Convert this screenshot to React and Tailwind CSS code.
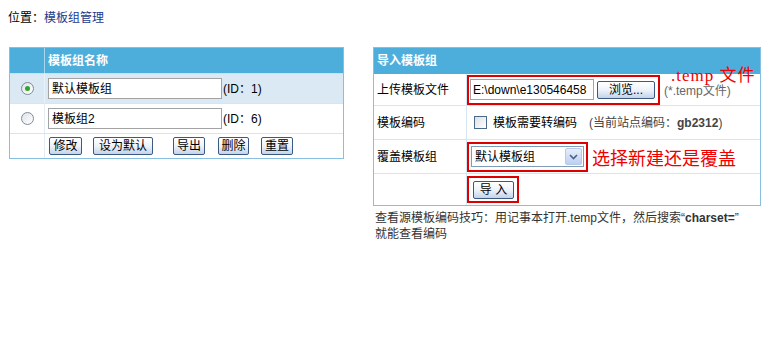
import React from "react";

function Btn({ children, className }) {
  return (
    <button
      className={
        "h-[18px] border border-[#3a5a82] rounded-[2px] bg-linear-to-b from-white via-[#eef3fa] to-[#c3d3ea] text-[12px] leading-[14px] text-black p-0 flex items-center justify-center shrink-0 " +
        className
      }
    >
      {children}
    </button>
  );
}

function Radio({ checked }) {
  return (
    <span className="w-[13px] h-[13px] rounded-full border border-[#7f8c99] bg-linear-to-br from-[#dfe3e8] to-white flex items-center justify-center">
      {checked ? <span className="w-[5px] h-[5px] rounded-full bg-[#2ea62a]" /> : null}
    </span>
  );
}

export default function App() {
  return (
    <div className="w-[784px] h-[344px] bg-white text-[12px] text-black font-['Liberation_Sans','Noto_Sans_CJK_SC',sans-serif] overflow-hidden relative">
      <div className="pl-[8px] pt-[11px] leading-[14px]">
        位置：<span className="text-[#1b3a8a]">模板组管理</span>
      </div>

      <div className="flex items-start mt-[22px] pl-[9px]">
        {/* Left table */}
        <div className="w-[335px] border border-[#86bfe2]">
          <div className="flex h-[26px] bg-[#4eaedb] border-b border-[#c8e2f2]">
            <div className="w-[35px] border-r border-[#a9d6ef]" />
            <div className="pl-[3px] flex items-center text-white font-bold">模板组名称</div>
          </div>
          <div className="flex h-[30px] bg-[#dbe9f5] border-b border-[#d5e5f1]">
            <div className="w-[35px] border-r border-[#e9f2f9] flex items-center justify-center">
              <Radio checked />
            </div>
            <div className="flex items-center pl-[3px]">
              <div className="w-[174px] h-[21px] border border-[#a3a3a3] bg-white pl-[3px] flex items-center">默认模板组</div>
              <span className="ml-[1px]">(ID：1)</span>
            </div>
          </div>
          <div className="flex h-[30px] bg-white border-b border-[#d5e5f1]">
            <div className="w-[35px] border-r border-[#e3edf5] flex items-center justify-center">
              <Radio />
            </div>
            <div className="flex items-center pl-[3px]">
              <div className="w-[174px] h-[21px] border border-[#a3a3a3] bg-white pl-[3px] flex items-center">模板组2</div>
              <span className="ml-[1px]">(ID：6)</span>
            </div>
          </div>
          <div className="flex h-[24px] bg-white">
            <div className="w-[35px] border-r border-[#e3edf5]" />
            <div className="flex items-center">
              <Btn className="ml-[4px] w-[33px]">修改</Btn>
              <Btn className="ml-[11px] w-[60px]">设为默认</Btn>
              <Btn className="ml-[20px] w-[32px]">导出</Btn>
              <Btn className="ml-[13px] w-[31px]">删除</Btn>
              <Btn className="ml-[12px] w-[32px]">重置</Btn>
            </div>
          </div>
        </div>

        {/* Right column */}
        <div className="ml-[29px] w-[388px]">
          <div className="border border-[#86bfe2] relative">
            <div className="h-[26px] bg-[#4eaedb] pl-[3px] flex items-center text-white font-bold">导入模板组</div>

            <div className="flex h-[32px] border-b border-[#d5e5f1] relative">
              <div className="w-[93px] border-r border-[#d5e5f1] pl-[3px] flex items-center">上传模板文件</div>
              <div className="flex items-center">
                <div className="w-[193px] h-[30px] border-2 border-[#dd0000] flex items-center pl-[1px]">
                  <div className="w-[124px] h-[21px] border border-[#a3a3a3] bg-white pl-[2px] flex items-center overflow-hidden whitespace-nowrap">E:\down\e130546458</div>
                  <Btn className="ml-[3px] w-[58px]">浏览...</Btn>
                </div>
                <span className="ml-[4px] text-[#666] mt-[2px]">(*.temp文件)</span>
              </div>
              <div className="absolute left-[297px] top-[-7px] text-[#e00] text-[17px] leading-[18px] font-['Liberation_Serif','Noto_Sans_CJK_SC',serif] whitespace-nowrap tracking-[1px]">
                .temp 文件
              </div>
            </div>

            <div className="flex h-[34px] border-b border-[#d5e5f1]">
              <div className="w-[93px] border-r border-[#d5e5f1] pl-[3px] flex items-center">模板编码</div>
              <div className="flex items-center pl-[7px]">
                <span className="w-[13px] h-[13px] border border-[#4a6a8a] bg-linear-to-br from-[#dcdfe3] to-white" />
                <span className="ml-[6px]">模板需要转编码</span>
                <span className="ml-[12px] text-[#444]">
                  (当前站点编码：<b className="font-bold">gb2312</b>)
                </span>
              </div>
            </div>

            <div className="flex h-[34px] border-b border-[#d5e5f1]">
              <div className="w-[93px] border-r border-[#d5e5f1] pl-[3px] flex items-center">覆盖模板组</div>
              <div className="flex items-center">
                <div className="w-[121px] h-[30px] border-2 border-[#dd0000] flex items-center pl-[2px]">
                  <div className="w-[113px] h-[21px] border border-[#7f9db9] bg-white flex items-center">
                    <span className="pl-[3px] flex-1">默认模板组</span>
                    <span className="w-[17px] h-[17px] mr-[1px] rounded-[2px] border border-[#b8c9e6] bg-linear-to-b from-[#e6eefc] to-[#bcd0f2] flex items-center justify-center">
                      <svg width="9" height="6" viewBox="0 0 9 6">
                        <path d="M1 1 L4.5 4.5 L8 1" stroke="#4d6185" strokeWidth="1.6" fill="none" />
                      </svg>
                    </span>
                  </div>
                </div>
                <span className="ml-[4px] text-[#e00] text-[18px] leading-[20px] font-['Noto_Sans_CJK_SC',serif] whitespace-nowrap">选择新建还是覆盖</span>
              </div>
            </div>

            <div className="flex h-[31px]">
              <div className="w-[93px] border-r border-[#d5e5f1]" />
              <div className="flex items-center">
                <div className="w-[52px] h-[27px] border-2 border-[#dd0000] flex items-center pl-[4px]">
                  <Btn className="w-[41px]">导 入</Btn>
                </div>
              </div>
            </div>
          </div>
          <div className="pl-[2px] pt-[4px] leading-[16px] text-[#333]">
            查看源模板编码技巧：用记事本打开.temp文件，然后搜索“<b className="font-bold">charset=</b>”
            <br />
            就能查看编码
          </div>
        </div>
      </div>
    </div>
  );
}
